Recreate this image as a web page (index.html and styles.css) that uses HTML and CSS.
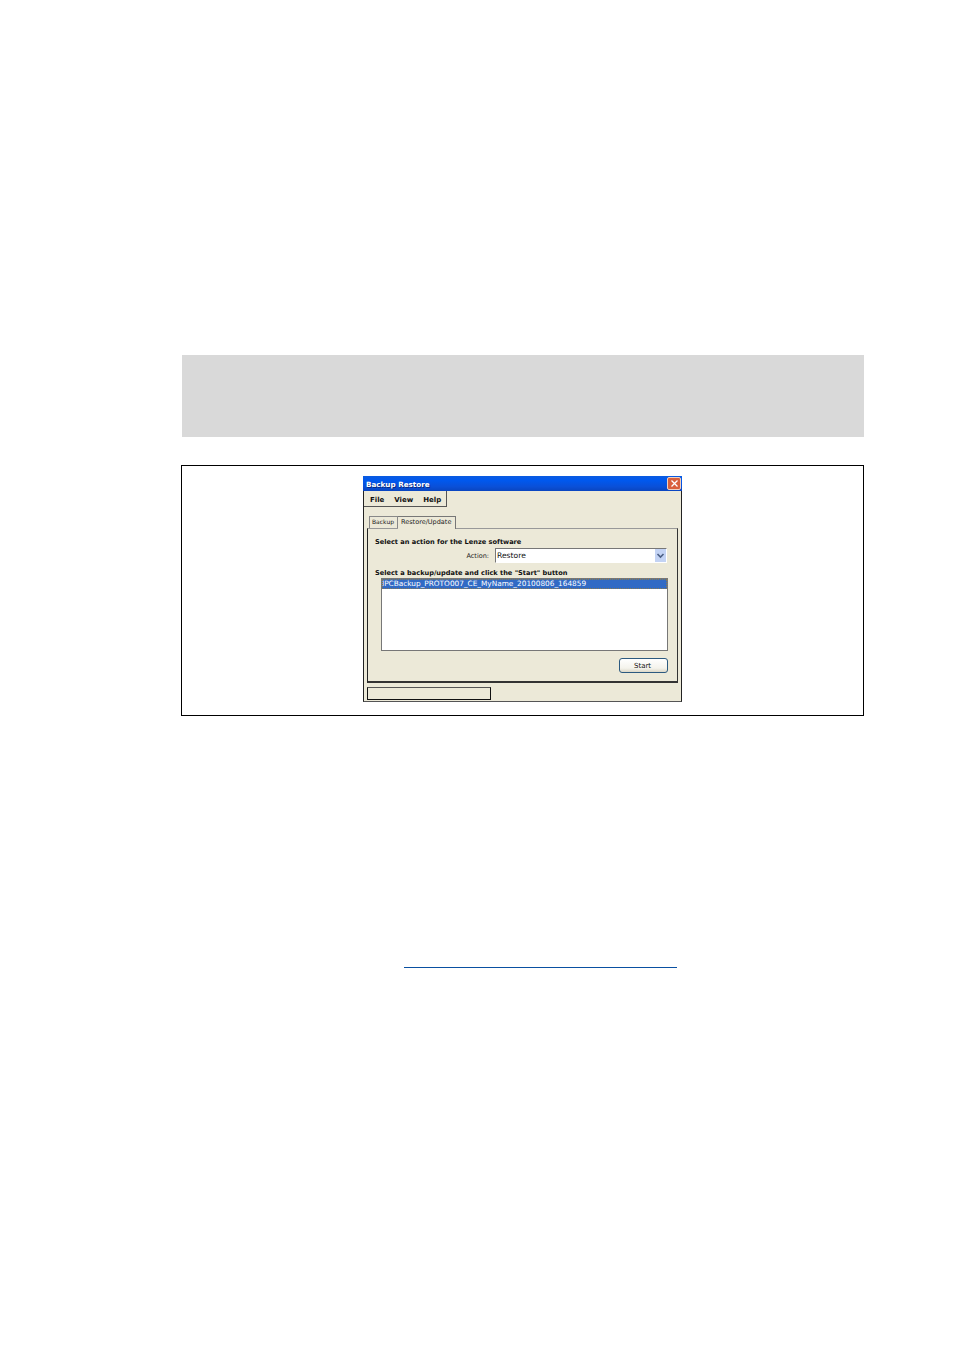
FILE: index.html
```html
<!DOCTYPE html>
<html lang="en">
<head>
<meta charset="utf-8">
<title>Backup Restore</title>
<link rel="stylesheet" href="styles.css">
</head>
<body>
<div class="note"></div>
<div class="figure">
  <div class="window">
    <div class="titlebar">
      <span class="title">Backup Restore</span>
      <span class="close"><svg width="11" height="11" viewBox="0 0 11 11"><path d="M2.5 2.5l6 6M8.5 2.5l-6 6" stroke="#fff" stroke-width="1.3" fill="none"/></svg></span>
    </div>
    <div class="menubar"><span>File</span><span>View</span><span>Help</span></div>
    <div class="tabs">
      <span class="tab">Backup</span>
      <span class="tab active">Restore/Update</span>
    </div>
    <div class="panel">
      <div class="heading first">Select an action for the Lenze software</div>
      <div class="action-row">
        <span class="action-label">Action:</span>
        <div class="combo">
          <span class="combo-value">Restore</span>
          <span class="combo-btn"><svg width="9" height="9" viewBox="0 0 9 9"><path d="M1.5 3l3 3 3-3" stroke="#4d6185" stroke-width="1.6" fill="none"/></svg></span>
        </div>
      </div>
      <div class="heading second">Select a backup/update and click the "Start" button</div>
      <div class="listbox"><div class="item">IPCBackup_PROTO007_CE_MyName_20100806_164859</div></div>
      <div class="actions"><span class="start">Start</span></div>
    </div>
    <div class="statusbar"><div class="status-cell"></div></div>
  </div>
</div>
<div class="rule"></div>
</body>
</html>
```
FILE: styles.css
```css
html, body { margin: 0; padding: 0; background: #fff; }
body { width: 954px; height: 1350px; overflow: hidden; font-family: "DejaVu Sans", sans-serif; font-size: 7px; color: #111; }

.note { width: 682px; height: 82px; margin: 355px 0 0 182px; background: #d9d9d9; }

.figure { box-sizing: border-box; width: 683px; height: 251px; margin: 28px 0 0 181px; border: 1px solid #000; padding-top: 10px; padding-left: 181px; }

.window { box-sizing: border-box; width: 319px; height: 226px; background: #ece9d8; border-left: 1px solid #222; border-right: 1px solid #222; border-bottom: 1px solid #555; }

.titlebar { height: 15px; margin: 0 -1px 0 -1px; display: flex; align-items: center; justify-content: space-between; padding: 0 1px 0 3px; background: linear-gradient(#0a5be0, #0058ee 30%, #0a50d8 70%, #0a45c0); }
.title { color: #fff; font-size: 7.2px; font-weight: bold; line-height: 13px; padding-top: 2px; text-shadow: 1px 1px 0 #0a2a80; }
.close { width: 14px; height: 13px; box-sizing: border-box; border: 1px solid #f0d0c0; border-radius: 2px; background: #d9603c; display: flex; align-items: center; justify-content: center; }

.menubar { box-sizing: border-box; width: 83px; height: 16px; display: flex; gap: 10px; align-items: center; padding: 2px 0 0 6px; border-right: 1px solid #555; border-bottom: 1px solid #555; font-size: 7px; font-weight: bold; }

.tabs { height: 13px; margin: 8px 0 0 4px; display: flex; align-items: flex-end; padding-left: 1px; }
.tab { box-sizing: border-box; height: 12px; padding: 1px 3px 0 2px; border: 1px solid #888; border-bottom: 0; color: #222; font-size: 6px; white-space: nowrap; background: #ece9d8; }
.tab.active { height: 13px; margin-left: 0; padding: 1px 4px 0 3px; border-left: 0; border-color: #777; font-size: 6.5px; position: relative; z-index: 1; margin-bottom: -1px; }

.panel { box-sizing: border-box; width: 311px; height: 155px; margin-left: 3px; padding: 9px 9px 0 7px; border: 1px solid #999; border-right: 1px solid #333; border-bottom: 2px solid #333; border-left: 1px solid #222; }

.heading { font-size: 6.6px; font-weight: bold; line-height: 9px; white-space: nowrap; }
.action-row { display: flex; align-items: center; height: 15px; margin-top: 1px; }
.action-label { width: 114px; text-align: right; font-size: 6.5px; color: #222; }
.combo { box-sizing: border-box; width: 172px; height: 15px; margin-left: 6px; background: #fff; border: 1px solid #fff; border-top-color: #777; border-left-color: #777; display: flex; align-items: center; justify-content: space-between; }
.combo-value { padding-left: 1px; font-size: 7.6px; }
.combo-btn { width: 11px; height: 13px; background: #c3d3f4; display: flex; align-items: center; justify-content: center; }
.second { margin-top: 6px; }

.listbox { box-sizing: border-box; width: 287px; height: 73px; margin: 0 0 0 6px; background: #fff; border: 1px solid #777; }
.item { height: 10px; line-height: 10px; background: #316ac5; color: #fff; font-size: 7.35px; white-space: nowrap; outline: 1px dotted #8a7a50; outline-offset: -1px; }

.actions { display: flex; justify-content: flex-end; margin-top: 7px; padding-right: 0; }
.start { box-sizing: border-box; width: 49px; height: 15px; border: 1px solid #2c5a80; border-radius: 3px; background: linear-gradient(#fff, #f4f3ec 70%, #dcd8c8); text-align: center; line-height: 14px; padding-right: 2px; font-size: 7px; color: #111; }

.statusbar { margin: 4px 0 0 3px; }
.status-cell { box-sizing: border-box; width: 124px; height: 13px; border: 1px solid #111; border-top-color: #555; }

.rule { width: 273px; height: 1px; margin: 251px 0 0 404px; background: #0a50a1; }
```
